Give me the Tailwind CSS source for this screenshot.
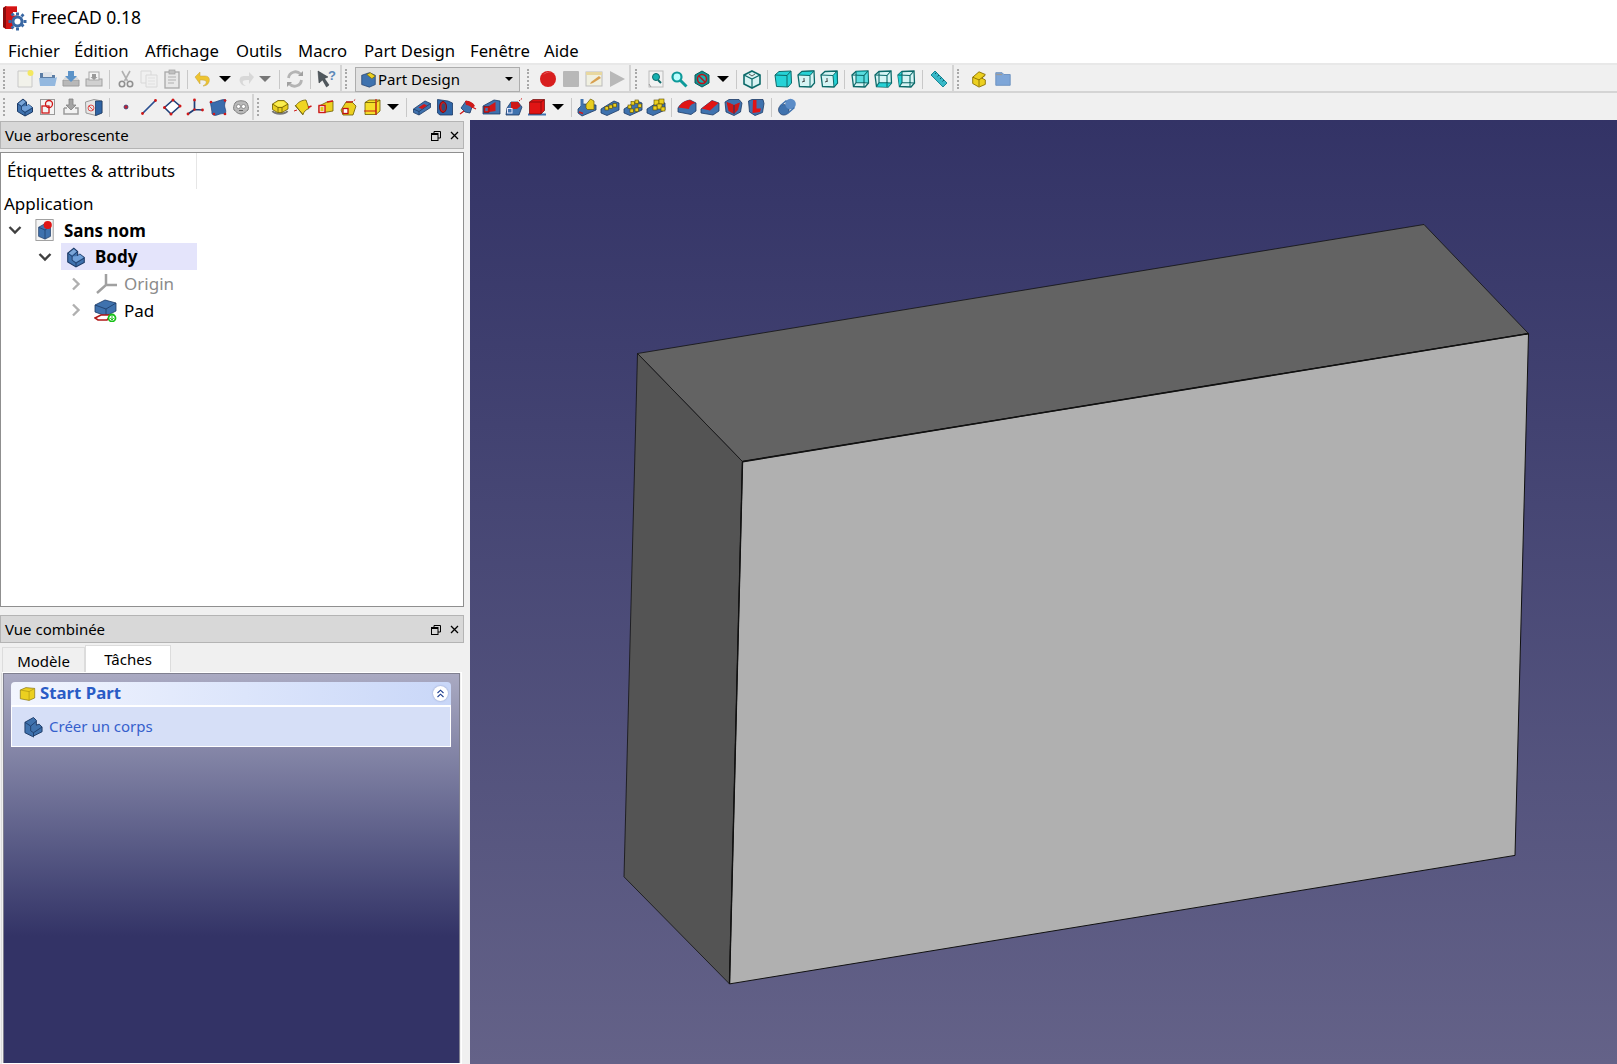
<!DOCTYPE html>
<html lang="fr">
  <head>
    <meta charset="UTF-8" />
    <title>FreeCAD 0.18</title>
    <script src="https://cdn.jsdelivr.net/npm/@tailwindcss/browser@4"></script>
  </head>
  <body class="font-['Noto_Sans',sans-serif] text-black bg-[#f0f0f0] overflow-hidden">
    <!-- shared icons -->
    <svg class="hidden" xmlns="http://www.w3.org/2000/svg">
      <symbol id="i-body" viewBox="0 0 20 20"><path d="M2.5 6.5 8 2l3.5 3v4l2-1.500 4 3v4.500L10 19l-7.500-4.500z" fill="#3f72ae" stroke="#1c3a66"/><path d="M6.500 9.500 11.500 9l2-1.500 3.500 3L10 14.500 6.500 12.500z" fill="#6f9fd8"/><path d="M2.500 6.500 6.500 9.500v3.500L10 15.500 17.500 11M10 15.500V19M6.500 9.500 11.500 5" fill="none" stroke="#1c3a66" stroke-width=".8"/><path d="M3.500 6.500 8 3l2.500 2-4 3.500z" fill="#7ba6d8"/></symbol>
      <symbol id="i-sketch" viewBox="0 0 20 20"><rect x="2.500" y="2.500" width="14" height="15" fill="#f4f4f4" stroke="#999"/><rect x="4" y="9" width="7" height="7" fill="none" stroke="#d01818" stroke-width="1.300"/><circle cx="11" cy="7" r="3.500" fill="none" stroke="#d01818" stroke-width="1.300"/></symbol>
      <symbol id="i-attach" viewBox="0 0 20 20"><path d="M3 11v6h14v-6h-3M3 11h3" fill="#f2f2f2" stroke="#9a9a9a" stroke-width="1.500"/><path d="M8 2h4v6h3l-5 5-5-5h3z" fill="#a4a4a4" stroke="#808080" stroke-width=".8"/></symbol>
      <symbol id="i-clone" viewBox="0 0 20 20"><path d="M1.500 5 10 2.500l8 1.500v12l-6 2.500-10-2.500z" fill="#e6e6e6" stroke="#999"/><path d="M11.500 4 18 4v12l-6.500 2.500z" fill="#2f64a4" stroke="#1c3a66" stroke-width=".8"/><circle cx="7" cy="11" r="3" fill="none" stroke="#e05050"/><path d="M5 9l4 4" stroke="#e05050"/></symbol>
      <symbol id="i-point" viewBox="0 0 20 20"><circle cx="10" cy="10" r="2" fill="#c81e2e" stroke="#2a3f7a" stroke-width=".8"/></symbol>
      <symbol id="i-line" viewBox="0 0 20 20"><path d="M3.500 16.500 16.500 3.500" stroke="#2a4f90" stroke-width="1.700"/><circle cx="3.500" cy="16.500" r="1.400" fill="#d01818"/><circle cx="16.500" cy="3.500" r="1.400" fill="#d01818"/></symbol>
      <symbol id="i-plane" viewBox="0 0 20 20"><path d="M11 3 18 9 9 17 2.500 10.500z" fill="#fff" stroke="#1f3f78" stroke-width="1.600"/><circle cx="11" cy="3" r="1.500" fill="#d01818"/><circle cx="18" cy="9" r="1.500" fill="#d01818"/><circle cx="9" cy="17" r="1.500" fill="#d01818"/><circle cx="2.500" cy="10.500" r="1.500" fill="#d01818"/></symbol>
      <symbol id="i-lcs" viewBox="0 0 20 20"><path d="M9.500 3v9.500L3 17M9.500 12.500 17.500 13" fill="none" stroke="#1f3f78" stroke-width="1.700"/><circle cx="9.500" cy="3" r="1.400" fill="#d01818"/><circle cx="3" cy="17" r="1.400" fill="#d01818"/><circle cx="17.500" cy="13" r="1.400" fill="#d01818"/><circle cx="9.500" cy="12.500" r="1.200" fill="#d01818"/></symbol>
      <symbol id="i-binder" viewBox="0 0 20 20"><path d="M2 5c3 1 5 0 8-1s6-2 8-1c-1 3-2 5-1 8 1 2 1 5 0 6-3-1-5 0-8 1-2 1-4 0-5-1 0-3-1-9-2-12z" fill="#3a6cac" stroke="#1f3f78" stroke-width=".7"/><circle cx="3" cy="5" r="1.300" fill="#d01818"/><circle cx="17" cy="3.500" r="1.300" fill="#d01818"/><circle cx="17" cy="17" r="1.300" fill="#d01818"/><circle cx="6" cy="17" r="1.300" fill="#d01818"/></symbol>
      <symbol id="i-sub" viewBox="0 0 20 20"><path d="M4 6c2-3 10-3 12 0 1 2 2 5 1 7-2 1-3 4-7 4s-5-3-7-4c-1-2 0-5 1-7z" fill="#b8b8b8" stroke="#808080"/><circle cx="7.500" cy="9.500" r="2" fill="#fff" stroke="#666" stroke-width=".6"/><circle cx="12.500" cy="9.500" r="2" fill="#fff" stroke="#666" stroke-width=".6"/><path d="M8 13.500h4" stroke="#666"/></symbol>
      <symbol id="i-pad" viewBox="0 0 20 20"><path d="M2.500 14c2 3.500 13 3.500 15 0" fill="none" stroke="#777" stroke-width="2"/><path d="M2.500 7 8 3.500h6L18 7v5l-6 3.500H7.500l-5-3z" fill="#e8cd20" stroke="#6a5a00" stroke-width=".8"/><path d="M2.500 7 8 10.500h4L18 7M8 10.500v5M12 10.500v5" fill="none" stroke="#6a5a00" stroke-width=".8"/><path d="M4 7 8.500 4.500h5L16.500 7 12 9.500H8z" fill="#fbee50"/></symbol>
      <symbol id="i-rev" viewBox="0 0 20 20"><path d="M2.500 9C5 5 9 3 13 3l3 8.500c-3 1-5 3-6 6z" fill="#efd522" stroke="#6a5a00" stroke-width=".8"/><path d="M2 8l8 10" stroke="#6a5a00" stroke-width=".8"/><path d="M15 10.500l3.500-1.500" stroke="#d01818" stroke-width="1.400"/><path d="M1 14l3-1" stroke="#d01818"/></symbol>
      <symbol id="i-aloft" viewBox="0 0 20 20"><path d="M3 9 11 5l6-1v10L8 15.500H3z" fill="#ecd020" stroke="#6a5a00" stroke-width=".8"/><rect x="3" y="8.500" width="6" height="7" fill="#fff" stroke="#d01818" stroke-width="1.400"/><rect x="4.400" y="10" width="3.200" height="4" fill="#e0c420"/><path d="M11 5l6-1" stroke="#d01818" stroke-width="1.300"/></symbol>
      <symbol id="i-apipe" viewBox="0 0 20 20"><path d="M7 5h6l4 4-3 9H4l-2-5z" fill="#ecd020" stroke="#6a5a00" stroke-width=".8"/><rect x="4" y="11.500" width="5" height="5" fill="#fff" stroke="#c01010" stroke-width="1.300"/><path d="M7 5h6" stroke="#c01010" stroke-width="1.300"/><path d="M13 5l4-3" stroke="#c01010" stroke-dasharray="1.500 1"/></symbol>
      <symbol id="i-abox" viewBox="0 0 20 20"><path d="M3 5.500 7 3h11v11l-4 3.500H3z" fill="#f4de2a" stroke="#6a5a00" stroke-width=".8"/><path d="M3 5.500h11v12M14 5.500 18 3" fill="none" stroke="#6a5a00" stroke-width=".8"/><path d="M14 3v11H2M14 2v16" fill="none" stroke="#d01818" stroke-width="1.200"/></symbol>
      <symbol id="i-pocket" viewBox="0 0 20 20"><path d="M1.500 12 13 4l5.500 2.500v4L7 18l-5.500-2.500z" fill="#3f72ae" stroke="#1c3a66" stroke-width=".8"/><path d="M1.500 12 7 14.500 18.500 6.500M7 14.500V18" fill="none" stroke="#1c3a66" stroke-width=".8"/><path d="M6.500 10.500 12 7l3 1.500L10 12z" fill="#d01818"/></symbol>
      <symbol id="i-hole" viewBox="0 0 20 20"><path d="M2.500 2.500 13 4l4.500 2v12H5l-2.500-2z" fill="#2f66a8" stroke="#1c3a66" stroke-width=".8"/><ellipse cx="8" cy="10" rx="3.500" ry="5.500" fill="#d01818" stroke="#7a0e0e"/><ellipse cx="8.500" cy="10" rx="2" ry="3.800" fill="#334a75"/></symbol>
      <symbol id="i-groove" viewBox="0 0 20 20"><path d="M3 11 8 4l7 3-3 9-5-1z" fill="#3f72ae" stroke="#1c3a66" stroke-width=".8"/><path d="M7 4c3-1 8 1 10 5l-3 2c-2-2-4-3-6-3z" fill="#d01818"/><path d="M2 17l4-3M14 10l4 2" stroke="#d01818" stroke-width="1.300"/></symbol>
      <symbol id="i-sloft" viewBox="0 0 20 20"><path d="M2 9 13 3l6 1v13H2z" fill="#3f72ae" stroke="#1c3a66" stroke-width=".8"/><path d="M8 9 14.500 5v9L8 15z" fill="#d01818"/><rect x="3" y="9.500" width="5" height="6" fill="#d01818" stroke="#7a0e0e" stroke-width=".6"/><rect x="4.300" y="11" width="2.400" height="3" fill="#3f72ae"/></symbol>
      <symbol id="i-spipe" viewBox="0 0 20 20"><path d="M7 5h7l4 5-3 8H2l1-7z" fill="#3f72ae" stroke="#1c3a66" stroke-width=".8"/><path d="M7 5h7l2.500 4-3.500 3H7z" fill="#d01818"/><rect x="3.500" y="11.500" width="4.500" height="4.500" fill="#3f72ae" stroke="#e8e8ff"/><path d="M15 4l3-2.500" stroke="#d01818" stroke-dasharray="1.500 1"/></symbol>
      <symbol id="i-sbox" viewBox="0 0 20 20"><path d="M1 16.500h18v2H1z" fill="#3f72ae"/><path d="M2.500 5 6 2.500h11.500v11L14 17H2.500z" fill="#e01414" stroke="#6a0808" stroke-width=".7"/><path d="M2.500 5H14v12M14 5l3.500-2.500" fill="none" stroke="#6a0808" stroke-width=".7"/></symbol>
      <symbol id="i-mirror" viewBox="0 0 20 20"><path d="M1 12 6 7l13 1v5L5 19l-4-3z" fill="#3f72ae" stroke="#1c3a66" stroke-width=".8"/><path d="M5 2v13" stroke="#3f72ae" stroke-width="3"/><path d="M9 7.500 13.500 2l3.500 2v8.500h-6.500L9 11z" fill="#e8cd20" stroke="#6a5a00" stroke-width=".7"/><path d="M2 15l4 1.500" stroke="#d01818" stroke-width="1.500"/></symbol>
      <symbol id="i-linear" viewBox="0 0 20 20"><path d="M1 12 14 4l5 2v7L7 18.500 1 16z" fill="#3f72ae" stroke="#1c3a66" stroke-width=".8"/><rect x="5" y="9.500" width="3.500" height="3.500" fill="#e8cd20" stroke="#5a4a00" stroke-width=".6"/><rect x="9" y="8" width="3.500" height="3.500" fill="#e8cd20" stroke="#5a4a00" stroke-width=".6"/><rect x="13" y="6.500" width="3.500" height="3.500" fill="#e8cd20" stroke="#5a4a00" stroke-width=".6"/></symbol>
      <symbol id="i-polar" viewBox="0 0 20 20"><path d="M1 12 14 4l5 2v7L7 18.500 1 16z" fill="#3f72ae" stroke="#1c3a66" stroke-width=".8"/><g fill="#e8cd20" stroke="#5a4a00" stroke-width=".6"><rect x="12" y="3" width="3.500" height="3.500"/><rect x="15" y="7" width="3.500" height="3.500"/><rect x="12" y="11" width="3.500" height="3.500"/><rect x="7" y="12" width="3.500" height="3.500"/><rect x="5" y="8" width="3.500" height="3.500"/><rect x="8" y="4.500" width="3.500" height="3.500"/></g></symbol>
      <symbol id="i-multi" viewBox="0 0 20 20"><path d="M1 12 12 5l7 1v7L7 18.500 1 16z" fill="#3f72ae" stroke="#1c3a66" stroke-width=".8"/><g fill="#ecd020" stroke="#5a4a00" stroke-width=".6"><rect x="8" y="3" width="5" height="5"/><rect x="13" y="2" width="5" height="5"/><rect x="11" y="7" width="5" height="5"/><rect x="15" y="10" width="4" height="4"/><rect x="7" y="9" width="4" height="4"/></g></symbol>
      <symbol id="i-fillet" viewBox="0 0 20 20"><path d="M1 11c3-5 7-7 12-8l6 3v8l-5 3.500L1 15z" fill="#3f72ae" stroke="#1c3a66" stroke-width=".8"/><path d="M1.500 10.500c3-5 7-7 11.500-7.500l5.500 3c-4 .5-6 2.500-6.500 6z" fill="#e01414"/></symbol>
      <symbol id="i-chamfer" viewBox="0 0 20 20"><path d="M1 12 12 3.500l7 2.500v8l-6 4L1 16z" fill="#3f72ae" stroke="#1c3a66" stroke-width=".8"/><path d="M1.500 11.500 12 3.500 18.500 6 10 13.500z" fill="#e01414"/></symbol>
      <symbol id="i-draft" viewBox="0 0 20 20"><path d="M2 5 6 2.500h10L19 6l-1.500 9L11 18.500 3 15z" fill="#3f72ae" stroke="#1c3a66" stroke-width=".8"/><path d="M3.500 5 11 7l6-1.500L15 13l-4 4-5.500-3z" fill="#d01818"/><path d="M5 5h12L11 8z" fill="#3f72ae"/><path d="M11 8v9" stroke="#1c3a66"/></symbol>
      <symbol id="i-thick" viewBox="0 0 20 20"><path d="M2.500 4 6 2.500h11l1 4-1.500 9L9 18.500 3.500 15z" fill="#3f72ae" stroke="#1c3a66" stroke-width=".8"/><path d="M7 3h3.500v8.500H15l-1 3.500-7.500 1z" fill="#e01414"/></symbol>
      <symbol id="i-bool" viewBox="0 0 20 20"><circle cx="6.800" cy="12.800" r="5.300" fill="#3f72ae" stroke="#1c3a66" stroke-width=".7"/><circle cx="13.500" cy="7" r="5.300" fill="#5b8cc7"/><path d="M3 9 9.500 3.500M10 17 17.500 10.500" stroke="#3f72ae" stroke-width="1.500"/></symbol>
      <symbol id="i-view-cube" viewBox="0 0 20 20"><path d="M10 2 18 6v9l-8 4-8-4V6z" fill="#d8f2f2" stroke="#0c6a6a" stroke-width="1.600"/><path d="M2 6l8 4 8-4M10 10v9" fill="none" stroke="#0c6a6a" stroke-width="1.200"/><path d="M7 5l3 2 3-2" stroke="#333" fill="none" stroke-width=".8"/></symbol>
      <symbol id="i-front" viewBox="0 0 20 20"><path d="M6 2.500 18 2l.5 12L15 18l-11.500-.5L2 6z" fill="#25d2d6" stroke="#0c6a6a"/><path d="M2 6l12 .5V18M14 6.500 18 2" fill="none" stroke="#0c6a6a"/></symbol>
      <symbol id="i-top" viewBox="0 0 20 20"><path d="M6 2.500 18 2l.5 12L15 18l-11.500-.5L2 6z" fill="#d6f4f4" stroke="#0c6a6a" stroke-width="1.300"/><path d="M2 6 6 2.500 18 2l-4 4.500z" fill="#25d2d6" stroke="#0c6a6a"/><path d="M14 6.500V18" stroke="#0c6a6a"/><path d="M6 13l3-1M8 9v3" stroke="#333" stroke-width=".9"/></symbol>
      <symbol id="i-right" viewBox="0 0 20 20"><path d="M6 2.500 18 2l.5 12L15 18l-11.500-.5L2 6z" fill="#d6f4f4" stroke="#0c6a6a" stroke-width="1.300"/><path d="M14 6.500 18 2l.5 12L15 18z" fill="#25d2d6" stroke="#0c6a6a"/><path d="M2 6l12 .5" stroke="#0c6a6a"/><path d="M6 13l3-1M8 9v3" stroke="#333" stroke-width=".9"/></symbol>
      <symbol id="i-rear" viewBox="0 0 20 20"><path d="M6 2.500 18 2l.5 12L15 18l-11.500-.5L2 6z" fill="#d6f4f4" stroke="#0c6a6a" stroke-width="1.300"/><path d="M6 2.500 18 2v12L6 13.500z" fill="#25d2d6" opacity=".7"/><path d="M2 6l12 .5V18M14 6.500 18 2M6 2.500v11l-2.500 4M6 13.500l12.500.5" fill="none" stroke="#0c6a6a" stroke-width="1.100"/></symbol>
      <symbol id="i-bottom" viewBox="0 0 20 20"><path d="M6 2.500 18 2l.5 12L15 18l-11.500-.5L2 6z" fill="#d6f4f4" stroke="#0c6a6a" stroke-width="1.300"/><path d="M3.500 17.500 6 13.500l12.500.5L15 18z" fill="#25d2d6"/><path d="M2 6l12 .5V18M14 6.500 18 2M6 2.500v11l-2.500 4M6 13.500l12.500.5" fill="none" stroke="#0c6a6a" stroke-width="1.100"/></symbol>
      <symbol id="i-left" viewBox="0 0 20 20"><path d="M6 2.500 18 2l.5 12L15 18l-11.500-.5L2 6z" fill="#d6f4f4" stroke="#0c6a6a" stroke-width="1.300"/><path d="M2 6 6 2.500v11l-2.500 4z" fill="#25d2d6"/><path d="M2 6l12 .5V18M14 6.500 18 2M6 2.500v11l-2.500 4M6 13.500l12.500.5" fill="none" stroke="#0c6a6a" stroke-width="1.100"/></symbol>
      <symbol id="i-sans" viewBox="0 0 22 24"><rect x="1" y="0.500" width="19" height="23" fill="#f4f4f4" stroke="#999"/><path d="M4 9 11 5l6 3v11l-6 3-7-3z" fill="#3f72ae" stroke="#1c3a66" stroke-width=".8"/><path d="M4 9l7 3 6-4M11 12v10" fill="none" stroke="#1c3a66" stroke-width=".8"/><circle cx="14" cy="6.500" r="4.500" fill="#e01414"/></symbol>
    </svg>

    <!-- titre -->
    <div class="h-[35px] bg-white flex items-center pl-[3px]">
      <svg width="27" height="26" viewBox="0 0 27 26">
        <path d="M3 1h11v6H10v3.500h4v4.500H10V24H3L0 22V3z" fill="#d21414"/>
        <path d="M0 3l3-2v23l-3-2z" fill="#8c0c0c"/>
        <path d="M3 1h11v1H4z" fill="#ea5a5a"/>
        <g fill="#3a68a4">
          <circle cx="14.500" cy="16.500" r="6"/>
          <path d="M13 7.500h3v3h-3zM13 22.500h3v3h-3zM5.500 15h3v3h-3zM20.500 15h3v3h-3zM7.500 9.500l2.200-2 2 2-2.200 2zM17.500 20.500l2-2.200 2 2-2 2.200zM7.500 22.500l2-2.200 2 2-2 2.200zM17.500 10.500l2-2.200 2 2-2 2.200z"/>
        </g>
        <circle cx="14.500" cy="16.500" r="3" fill="#fff"/>
      </svg>
      <span class="ml-[1px] text-[17.500px] leading-none">FreeCAD 0.18</span>
    </div>

    <!-- menu -->
    <div class="h-[28px] pt-[4px] bg-white flex items-center text-[16.700px] leading-none pl-[8px]">
      <span class="w-[66px]">Fichier</span>
      <span class="w-[71px]">Édition</span>
      <span class="w-[91px]">Affichage</span>
      <span class="w-[62px]">Outils</span>
      <span class="w-[66px]">Macro</span>
      <span class="w-[106px]">Part Design</span>
      <span class="w-[74px]">Fenêtre</span>
      <span>Aide</span>
    </div>

    <!-- barre d'outils 1 -->
    <div class="h-[30px] bg-[#f0f0f0] border-t-2 border-t-[#e8e8e8] border-b-2 border-b-[#d4d4d4] flex items-center pl-[3px]">
      <div class="flex items-center h-full pt-[2px] pr-[2px] border-r-2 border-[#d4d4d4] w-[339px]">
        <span class="w-[3px] h-[20px] mr-[7px] border-l-2 border-dotted border-[#a8a8a8]"></span>
        <span class="w-[23px] flex justify-center">
          <svg width="20" height="20" viewBox="0 0 20 20"><path d="M3 2h14v16H3z" fill="#f2f2ea" stroke="#c8c8c8"/><circle cx="15.500" cy="4" r="3" fill="#f4e860"/></svg>
        </span>
        <span class="w-[23px] flex justify-center">
          <svg width="20" height="20" viewBox="0 0 20 20"><path d="M2 4h6l2 2h7v11H2z" fill="#5c7ea6"/><path d="M5 3h9v5H5z" fill="#dfe3e8"/><path d="M1 9h16l2-1-2 9H2z" fill="#93b8df"/></svg>
        </span>
        <span class="w-[23px] flex justify-center">
          <svg width="20" height="20" viewBox="0 0 20 20"><path d="M2 11h16v6H2z" fill="#b8b8b8" stroke="#9c9c9c"/><path d="M4 8h12l2 3H2z" fill="#d8d8d8"/><path d="M7 2h6v5h3l-6 6-6-6h3z" fill="#5c93c8"/></svg>
        </span>
        <span class="w-[23px] flex justify-center">
          <svg width="20" height="20" viewBox="0 0 20 20"><rect x="2" y="10" width="16" height="7" fill="#d0d0d0" stroke="#a0a0a0"/><rect x="5" y="3" width="10" height="8" fill="#f4f4f4" stroke="#a8a8a8"/><path d="M8 5h4v3h1.500L10 11 6.500 8H8z" fill="#9a9a9a"/></svg>
        </span>
        <span class="w-[9px] flex justify-center"><span class="w-px h-[19px] bg-[#c8c8c8]"></span></span>
        <span class="w-[23px] flex justify-center">
          <svg width="20" height="20" viewBox="0 0 20 20" fill="none" stroke="#b0b0b0"><path d="M6 2l5.500 10M14 2 8.500 12" stroke-width="1.600"/><circle cx="6" cy="15" r="2.700" stroke-width="1.600" stroke="#909090"/><circle cx="14" cy="15" r="2.700" stroke-width="1.600" stroke="#909090"/></svg>
        </span>
        <span class="w-[23px] flex justify-center">
          <svg width="20" height="20" viewBox="0 0 20 20" fill="#f0f0f0" stroke="#d8d8d8"><path d="M2 2h10v12H2z"/><path d="M7 6h11v12H7z"/><path d="M9 9h7M9 12h7M9 15h7" stroke="#e0e0e0"/></svg>
        </span>
        <span class="w-[23px] flex justify-center">
          <svg width="20" height="20" viewBox="0 0 20 20"><rect x="3" y="3" width="14" height="16" fill="#e8e8e8" stroke="#a8a8a8" stroke-width="1.300"/><rect x="7" y="1" width="6" height="4" fill="#c0c0c0" stroke="#a0a0a0" stroke-width=".7"/><path d="M6 8h8M6 11h8M6 14h6" stroke="#b0b0b0"/></svg>
        </span>
        <span class="w-[9px] flex justify-center"><span class="w-px h-[19px] bg-[#c8c8c8]"></span></span>
        <span class="w-[23px] flex justify-center">
          <svg width="20" height="20" viewBox="0 0 20 20"><path d="M6 3v4h5c4 0 5 3 4 6s-4 4-6 4c2-1 4-3 3-5-1-1-3-1-6-1v4L1 8z" fill="#eec430" stroke="#c0a040" stroke-width=".5"/></svg>
        </span>
        <span class="w-[20px] flex justify-center"><span class="border-x-[6px] border-x-transparent border-t-[6px] border-t-black"></span></span>
        <span class="w-[20px] flex justify-center">
          <svg width="20" height="20" viewBox="0 0 20 20"><path d="M14 3v4H9c-4 0-5 3-4 6s4 4 6 4c-2-1-4-3-3-5 1-1 3-1 6-1v4l5-7z" fill="#d8d8d8"/></svg>
        </span>
        <span class="w-[20px] flex justify-center"><span class="border-x-[6px] border-x-transparent border-t-[6px] border-t-[#777]"></span></span>
        <span class="w-[8px] flex justify-center"><span class="w-px h-[19px] bg-[#c8c8c8]"></span></span>
        <span class="w-[23px] flex justify-center">
          <svg width="20" height="20" viewBox="0 0 20 20" fill="none" stroke="#b4b4b4" stroke-width="2.800"><path d="M3.500 9a7 7 0 0 1 12-4"/><path d="M16.500 11a7 7 0 0 1-12 4"/><path d="M18 2v5h-5z" fill="#a0a0a0" stroke="none"/><path d="M2 18v-5h5z" fill="#a0a0a0" stroke="none"/></svg>
        </span>
        <span class="w-[9px] flex justify-center"><span class="w-px h-[19px] bg-[#c8c8c8]"></span></span>
        <span class="w-[23px] flex justify-center">
          <svg width="20" height="20" viewBox="0 0 20 20"><path d="M1 2l10 6-3.500 1.500L12 16l-2.500 2L5.500 11 2 14z" fill="#50585e" stroke="#2c3236" stroke-width=".5"/><text x="11" y="11" font-size="13" font-weight="700" fill="#5c88b8" font-family="Liberation Sans">?</text></svg>
        </span>
      </div>
      <span class="w-[3px] h-[20px] mx-[3px] mt-[2px] border-l-2 border-dotted border-[#a8a8a8]"></span>
      <div class="w-[165px] h-[25px] mx-[4px] mt-[2px] bg-[#e1e1e1] border border-[#adadad] flex items-center pl-[4px] pr-[6px]">
        <svg width="17" height="17" viewBox="0 0 20 20"><path d="M2 5 11 2l7 3v11l-7 3-9-3z" fill="#3f72ae" stroke="#1c3a66" stroke-width=".8"/><path d="M8 4l4-2 6 4-4 3z" fill="#ecd020" stroke="#6a5a00" stroke-width=".7"/></svg>
        <span class="ml-[1px] text-[15px] leading-none">Part Design</span>
        <span class="ml-auto border-x-[4px] border-x-transparent border-t-[4px] border-t-black"></span>
      </div>
      <span class="w-[3px] h-[20px] mx-[3px] mt-[2px] border-l-2 border-dotted border-[#a8a8a8]"></span>
      <div class="flex items-center h-full pt-[2px] border-r-2 border-[#d4d4d4] w-[98px] pl-[3px]">
        <span class="w-[23px] flex justify-center">
          <svg width="20" height="20" viewBox="0 0 20 20"><circle cx="10" cy="10" r="8" fill="#d81e1e"/><path d="M5 6a7 7 0 0 1 9-2 9 9 0 0 0-9 2z" fill="#ee7a7a"/></svg>
        </span>
        <span class="w-[23px] flex justify-center">
          <svg width="20" height="20" viewBox="0 0 20 20"><rect x="2" y="2" width="16" height="16" rx="1" fill="#b8b8b8"/></svg>
        </span>
        <span class="w-[23px] flex justify-center">
          <svg width="20" height="20" viewBox="0 0 20 20"><rect x="2" y="3" width="16" height="14" fill="#f0f0e0" stroke="#bcbcbc"/><path d="M2 3h16v3H2z" fill="#e8d8a0"/><path d="M7 13l8-6 2 2-8 5-3 1z" fill="#d8a050"/></svg>
        </span>
        <span class="w-[23px] flex justify-center">
          <svg width="20" height="20" viewBox="0 0 20 20"><path d="M3 2l15 8-15 8z" fill="#b8b8b8"/></svg>
        </span>
      </div>
      <span class="w-[3px] h-[20px] mx-[4px] mt-[2px] border-l-2 border-dotted border-[#a8a8a8]"></span>
      <div class="flex items-center h-full pt-[2px] border-r-2 border-[#d4d4d4] w-[312px] pl-[2px]">
        <span class="w-[23px] flex justify-center">
          <svg width="20" height="20" viewBox="0 0 20 20"><rect x="3" y="2" width="14" height="16" fill="#f2f2f2" stroke="#bbb"/><circle cx="10" cy="8" r="3.500" fill="#15b0b0" stroke="#0c6a6a"/><path d="M12 11l3 3" stroke="#0c6a6a" stroke-width="2"/><path d="M3 15l2 3" stroke="#999"/></svg>
        </span>
        <span class="w-[23px] flex justify-center">
          <svg width="20" height="20" viewBox="0 0 20 20"><circle cx="8" cy="8" r="4.500" fill="#bff" stroke="#0e9a9a" stroke-width="2.200"/><path d="M11.500 11.500l6 6" stroke="#0e9a9a" stroke-width="3"/></svg>
        </span>
        <span class="w-[23px] flex justify-center">
          <svg width="20" height="20" viewBox="0 0 20 20"><path d="M10 2l7 4v8l-7 4-7-4V6z" fill="#109090" stroke="#0c5a5a"/><circle cx="10" cy="10" r="4.500" fill="#18b0b0" stroke="#c01018" stroke-width="1.500"/><path d="M7 7l6 6" stroke="#c01018" stroke-width="1.500"/></svg>
        </span>
        <span class="w-[19px] flex justify-center"><span class="border-x-[6px] border-x-transparent border-t-[6px] border-t-black"></span></span>
        <span class="w-[8px] flex justify-center"><span class="w-px h-[19px] bg-[#c8c8c8]"></span></span>
        <span class="w-[23px] flex justify-center"><svg width="20" height="20"><use href="#i-view-cube"/></svg></span>
        <span class="w-[8px] flex justify-center"><span class="w-px h-[19px] bg-[#c8c8c8]"></span></span>
        <span class="w-[23px] flex justify-center"><svg width="20" height="20"><use href="#i-front"/></svg></span>
        <span class="w-[23px] flex justify-center"><svg width="20" height="20"><use href="#i-top"/></svg></span>
        <span class="w-[23px] flex justify-center"><svg width="20" height="20"><use href="#i-right"/></svg></span>
        <span class="w-[8px] flex justify-center"><span class="w-px h-[19px] bg-[#c8c8c8]"></span></span>
        <span class="w-[23px] flex justify-center"><svg width="20" height="20"><use href="#i-rear"/></svg></span>
        <span class="w-[23px] flex justify-center"><svg width="20" height="20"><use href="#i-bottom"/></svg></span>
        <span class="w-[23px] flex justify-center"><svg width="20" height="20"><use href="#i-left"/></svg></span>
        <span class="w-[10px] flex justify-center"><span class="w-px h-[19px] bg-[#c8c8c8]"></span></span>
        <span class="w-[23px] flex justify-center">
          <svg width="20" height="20" viewBox="0 0 20 20"><path d="M6 2 18 14l-4 4L2 6z" fill="#38b8c8" stroke="#1a8896"/><path d="M6 5l1.500-1.500M8.500 7.500 10 6M11 10l1.500-1.500M13.500 12.500 15 11" stroke="#0c5a66"/></svg>
        </span>
      </div>
      <span class="w-[3px] h-[20px] mx-[3px] mt-[2px] border-l-2 border-dotted border-[#a8a8a8]"></span>
      <div class="flex items-center h-full pt-[2px] pl-[4px]">
        <span class="w-[24px] flex justify-center">
          <svg width="18" height="18" viewBox="0 0 20 20"><path d="M3 8 10 2l7 3-4 4 4 2v5l-7 3-7-4z" fill="#ecd020" stroke="#8a7000"/><path d="M3 8l7 3 7-5M10 11v7" fill="none" stroke="#8a7000"/></svg>
        </span>
        <span class="w-[24px] flex justify-center">
          <svg width="18" height="18" viewBox="0 0 20 20"><path d="M2 3h7l2 2h7v12H2z" fill="#7ea6d8" stroke="#6a90c0"/><path d="M2 5h7" stroke="#9a9a9a" stroke-width="1.500"/></svg>
        </span>
      </div>
    </div>

    <!-- barre d'outils 2 -->
    <div class="h-[27px] pt-[1px] bg-[#f0f0f0] flex items-center pl-[3px]">
      <div class="flex items-center h-full border-r-2 border-[#d4d4d4] w-[251px]">
        <span class="w-[3px] h-[18px] mr-[7px] border-l-2 border-dotted border-[#a8a8a8]"></span>
        <span class="w-[23px] flex justify-center"><svg width="20" height="20"><use href="#i-body"/></svg></span>
        <span class="w-[23px] flex justify-center"><svg width="20" height="20"><use href="#i-sketch"/></svg></span>
        <span class="w-[23px] flex justify-center"><svg width="20" height="20"><use href="#i-attach"/></svg></span>
        <span class="w-[23px] flex justify-center"><svg width="20" height="20"><use href="#i-clone"/></svg></span>
        <span class="w-[9px] flex justify-center"><span class="w-px h-[19px] bg-[#c8c8c8]"></span></span>
        <span class="w-[23px] flex justify-center"><svg width="20" height="20"><use href="#i-point"/></svg></span>
        <span class="w-[23px] flex justify-center"><svg width="20" height="20"><use href="#i-line"/></svg></span>
        <span class="w-[23px] flex justify-center"><svg width="20" height="20"><use href="#i-plane"/></svg></span>
        <span class="w-[23px] flex justify-center"><svg width="20" height="20"><use href="#i-lcs"/></svg></span>
        <span class="w-[23px] flex justify-center"><svg width="20" height="20"><use href="#i-binder"/></svg></span>
        <span class="w-[23px] flex justify-center"><svg width="20" height="20"><use href="#i-sub"/></svg></span>
      </div>
      <span class="w-[3px] h-[18px] mx-[3px] border-l-2 border-dotted border-[#a8a8a8]"></span>
      <div class="flex items-center h-full pl-[5px]">
        <span class="w-[23px] flex justify-center"><svg width="20" height="20"><use href="#i-pad"/></svg></span>
        <span class="w-[23px] flex justify-center"><svg width="20" height="20"><use href="#i-rev"/></svg></span>
        <span class="w-[23px] flex justify-center"><svg width="20" height="20"><use href="#i-aloft"/></svg></span>
        <span class="w-[23px] flex justify-center"><svg width="20" height="20"><use href="#i-apipe"/></svg></span>
        <span class="w-[23px] flex justify-center"><svg width="20" height="20"><use href="#i-abox"/></svg></span>
        <span class="w-[19px] flex justify-center"><span class="border-x-[6px] border-x-transparent border-t-[6px] border-t-black"></span></span>
        <span class="w-[8px] flex justify-center"><span class="w-px h-[19px] bg-[#c8c8c8]"></span></span>
        <span class="w-[23px] flex justify-center"><svg width="20" height="20"><use href="#i-pocket"/></svg></span>
        <span class="w-[23px] flex justify-center"><svg width="20" height="20"><use href="#i-hole"/></svg></span>
        <span class="w-[23px] flex justify-center"><svg width="20" height="20"><use href="#i-groove"/></svg></span>
        <span class="w-[23px] flex justify-center"><svg width="20" height="20"><use href="#i-sloft"/></svg></span>
        <span class="w-[23px] flex justify-center"><svg width="20" height="20"><use href="#i-spipe"/></svg></span>
        <span class="w-[23px] flex justify-center"><svg width="20" height="20"><use href="#i-sbox"/></svg></span>
        <span class="w-[19px] flex justify-center"><span class="border-x-[6px] border-x-transparent border-t-[6px] border-t-black"></span></span>
        <span class="w-[8px] flex justify-center"><span class="w-px h-[19px] bg-[#c8c8c8]"></span></span>
        <span class="w-[23px] flex justify-center"><svg width="20" height="20"><use href="#i-mirror"/></svg></span>
        <span class="w-[23px] flex justify-center"><svg width="20" height="20"><use href="#i-linear"/></svg></span>
        <span class="w-[23px] flex justify-center"><svg width="20" height="20"><use href="#i-polar"/></svg></span>
        <span class="w-[23px] flex justify-center"><svg width="20" height="20"><use href="#i-multi"/></svg></span>
        <span class="w-[8px] flex justify-center"><span class="w-px h-[19px] bg-[#c8c8c8]"></span></span>
        <span class="w-[23px] flex justify-center"><svg width="20" height="20"><use href="#i-fillet"/></svg></span>
        <span class="w-[23px] flex justify-center"><svg width="20" height="20"><use href="#i-chamfer"/></svg></span>
        <span class="w-[23px] flex justify-center"><svg width="20" height="20"><use href="#i-draft"/></svg></span>
        <span class="w-[23px] flex justify-center"><svg width="20" height="20"><use href="#i-thick"/></svg></span>
        <span class="w-[8px] flex justify-center"><span class="w-px h-[19px] bg-[#c8c8c8]"></span></span>
        <span class="w-[23px] flex justify-center"><svg width="20" height="20"><use href="#i-bool"/></svg></span>
      </div>
    </div>

    <!-- zone principale -->
    <div class="flex h-[944px]">
      <!-- panneaux -->
      <div class="w-[470px] flex flex-col pr-[6px] pt-[1px]">
        <!-- vue arborescente -->
        <div class="h-[28px] bg-[#d8d8d8] border border-[#b4b4b4] flex items-center pt-[1px] pl-[4px] pr-[4px]">
          <span class="text-[15px] leading-none flex-1">Vue arborescente</span>
          <svg width="10" height="10" viewBox="0 0 10 10" fill="none" stroke="#000" class="mr-[9px]"><rect x=".5" y="2.500" width="6.500" height="7"/><path d="M3 2.500v-2h6.500v6.500H7"/><path d="M1 3.500h6"/></svg>
          <svg width="9" height="9" viewBox="0 0 9 9" stroke="#000" stroke-width="1.300"><path d="M1 1l7 7M8 1 1 8"/></svg>
        </div>
        <div class="h-[455px] mt-[3px] bg-white border border-[#8f8f8f]">
          <div class="w-[196px] h-[36px] flex items-center pl-[6px] pt-[1px] border-r border-[#e6e6e6] text-[16.800px] leading-none">Étiquettes &amp; attributs</div>
          <div class="text-[17px] leading-none">
            <div class="h-[27px] flex items-center pl-[3px] pt-[1px]">Application</div>
            <div class="h-[27px] flex items-center pt-[1px]">
              <svg width="14" height="10" viewBox="0 0 14 10" class="ml-[7px] mr-[13px]" fill="none" stroke="#404040" stroke-width="2.400"><path d="M1.500 2 7 7.500 12.500 2"/></svg>
              <svg width="20" height="24"><use href="#i-sans"/></svg>
              <span class="ml-[9px] font-bold">Sans nom</span>
            </div>
            <div class="h-[27px] flex items-center">
              <svg width="14" height="10" viewBox="0 0 14 10" class="ml-[37px] mr-[9px]" fill="none" stroke="#404040" stroke-width="2.400"><path d="M1.500 2 7 7.500 12.500 2"/></svg>
              <div class="w-[136px] h-full bg-[#e4e4fb] flex items-center pl-[4px]">
                <svg width="22" height="22"><use href="#i-body"/></svg>
                <span class="ml-[8px] font-bold">Body</span>
              </div>
            </div>
            <div class="h-[27px] flex items-center text-[#8b8b8b]">
              <svg width="10" height="14" viewBox="0 0 10 14" class="ml-[70px] mr-[13px]" fill="none" stroke="#b0b0b0" stroke-width="2.400"><path d="M2 1.500 7.500 7 2 12.500"/></svg>
              <svg width="24" height="24" viewBox="0 0 24 24" fill="none" stroke="#a0a0a0" stroke-width="2.500"><path d="M12 2v11L3 21M12 13h11"/></svg>
              <span class="ml-[6px]">Origin</span>
            </div>
            <div class="h-[26px] flex items-center">
              <svg width="10" height="14" viewBox="0 0 10 14" class="ml-[70px] mr-[13px]" fill="none" stroke="#b0b0b0" stroke-width="2.400"><path d="M2 1.500 7.500 7 2 12.500"/></svg>
              <svg width="24" height="24" viewBox="0 0 24 24">
                <path d="M1 7l10-5 11 3v8l-10 5-11-4z" fill="#3f72ae" stroke="#1c3a66" stroke-width=".8"/>
                <path d="M1 7l11 4 10-6M12 11v7" fill="none" stroke="#1c3a66" stroke-width=".8"/>
                <path d="M1 20l6-3h10l-4 5H4z" fill="#fff" stroke="#b01818" stroke-width="1.600"/>
                <circle cx="18" cy="20" r="3.500" fill="#fff" stroke="#18c018" stroke-width="1.800"/>
                <path d="M18 17.500v4M16.300 20l1.700 2 1.700-2" stroke="#18c018" fill="none"/>
              </svg>
              <span class="ml-[6px]">Pad</span>
            </div>
          </div>
        </div>

        <!-- vue combinee -->
        <div class="h-[28px] mt-[8px] bg-[#d8d8d8] border border-[#b4b4b4] flex items-center pt-[1px] pl-[4px] pr-[4px]">
          <span class="text-[15px] leading-none flex-1">Vue combinée</span>
          <svg width="10" height="10" viewBox="0 0 10 10" fill="none" stroke="#000" class="mr-[9px]"><rect x=".5" y="2.500" width="6.500" height="7"/><path d="M3 2.500v-2h6.500v6.500H7"/><path d="M1 3.500h6"/></svg>
          <svg width="9" height="9" viewBox="0 0 9 9" stroke="#000" stroke-width="1.300"><path d="M1 1l7 7M8 1 1 8"/></svg>
        </div>
        <div class="flex items-end h-[29px] pl-[2px] text-[15px] leading-none">
          <div class="w-[83px] h-[25px] bg-[#f0f0f0] border border-b-0 border-[#dcdcdc] flex items-center justify-center pt-[2px]">Modèle</div>
          <div class="w-[86px] h-[27px] bg-white border border-b-0 border-[#dcdcdc] flex items-center justify-center">Tâches</div>
        </div>
        <!-- taches -->
        <div class="flex-1 border border-white border-l-[#dcdcdc] ml-[1px] mr-[2px]">
          <div class="h-full mx-[1px] border-x border-t border-[#808090] bg-linear-to-b from-[#aaaac2] to-[#333366] to-[67.500%] pl-[7px] pr-[8px] pt-[8px]">
            <div class="h-[25px] rounded-t-[4px] border-b-2 border-white bg-linear-to-r from-[#f2f5fe] to-[#c9d7f8] flex items-center pl-[8px] pr-[3px]">
              <svg width="17" height="16" viewBox="0 0 20 20"><path d="M1 5 8 2l11 1v12l-7 3-11-2z" fill="#ecd020" stroke="#7a6a10" stroke-width=".8"/><path d="M1 5l11 2 7-4M12 7v11" fill="none" stroke="#a89010" stroke-width=".8"/></svg>
              <span class="ml-[4px] font-bold text-[16.800px] leading-none text-[#2a5cc6] flex-1">Start Part</span>
              <span class="w-[15px] h-[15px] rounded-full bg-white shadow-[0_0_2px_#8a97c0] flex items-center justify-center">
                <svg width="9" height="9" viewBox="0 0 9 9" fill="none" stroke="#1f3f90" stroke-width="1.100"><path d="M1.500 4 4.500 1.200 7.500 4M1.500 8 4.500 5.200 7.500 8"/></svg>
              </span>
            </div>
            <div class="h-[40px] bg-[#d6dff7] border-x border-b border-white flex items-center pl-[12px]">
              <svg width="19" height="22" viewBox="0 0 20 22"><path d="M1 6 10 1l3 3v5l3-1 3 3v5l-10 5-8-4z" fill="#3f72ae" stroke="#1c3a66"/><path d="M1 6l6 4v5l3 2 9-6M10 17v5M7 10l6-5" fill="none" stroke="#1c3a66" stroke-width=".9"/></svg>
              <span class="ml-[6px] text-[15px] leading-none text-[#3560cc]">Créer un corps</span>
            </div>
          </div>
        </div>
      </div>

      <!-- vue 3D -->
      <div class="relative flex-1 bg-linear-to-b from-[#333366] to-[#646288]">
        <svg class="absolute inset-0" width="1147" height="944" viewBox="0 0 1147 944">
          <path d="M167.500 233.500 954 104.500 1058.500 213.600 272.500 341.600z" fill="#636363" stroke="#111" stroke-width=".8" stroke-linejoin="round"/>
          <path d="M167.500 233.500 272.500 341.600 259.500 863.900 154 756.800z" fill="#545454" stroke="#111" stroke-width=".8" stroke-linejoin="round"/>
          <path d="M272.500 341.600 1058.500 213.600 1045 735.400 259.500 863.900z" fill="#b0b0b0" stroke="#111" stroke-width="1" stroke-linejoin="round"/>
          <path d="M272.500 341.600 1058.500 213.600" stroke="#111" stroke-width="1.600" fill="none"/>
          <path d="M272.500 341.600 259.500 863.900" stroke="#111" stroke-width="1.400" fill="none"/>
        </svg>
      </div>
    </div>
  </body>
</html>
